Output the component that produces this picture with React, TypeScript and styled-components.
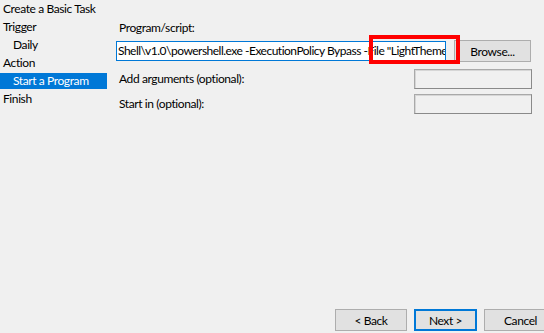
import styled, { createGlobalStyle } from "styled-components";

const GlobalStyle = createGlobalStyle`
    html, body {
        margin: 0;
        padding: 0;
        background: #f0f0f0;
        overflow: hidden;
    }
    body {
        font-family: Lato, "Noto Sans", sans-serif;
        font-size: 12px;
        letter-spacing: -0.4px;
        color: #000;
    }
`;

const Window = styled.div`
    width: 544px;
    height: 333px;
    display: flex;
    flex-direction: column;
    background: #f0f0f0;
`;

const Body = styled.div`
    flex: 1;
    display: flex;
`;

const Steps = styled.ul`
    list-style: none;
    margin: 0;
    padding: 0;
    width: 107px;
    flex-shrink: 0;
`;

const Step = styled.li<{ $sub?: boolean; $active?: boolean }>`
    height: 18px;
    line-height: 18px;
    padding-left: ${props => props.$sub ? "13px" : "3px"};
    white-space: nowrap;
    overflow: hidden;
    background: ${props => props.$active ? "#0078d7" : "transparent"};
    color: ${props => props.$active ? "#fff" : "#000"};
    box-shadow: ${props => props.$active ? "inset 0 1px #f0f0f0, inset 0 -1px #f0f0f0" : "none"};
`;

const Content = styled.div`
    flex: 1;
    min-width: 0;
    padding: 20px 12px 0 9px;
    display: flex;
    flex-direction: column;
`;

const Label = styled.span`
    padding-left: 3px;
    line-height: 16px;
    white-space: nowrap;
`;

const ProgramRow = styled.div`
    position: relative;
    display: flex;
    align-items: center;
    gap: 8px;
    margin-top: 4px;
`;

const PathBox = styled.div`
    flex: 1;
    min-width: 0;
    height: 20px;
    box-sizing: border-box;
    border: 1px solid #0078d7;
    background: #fff;
    overflow: hidden;
    white-space: nowrap;
    line-height: 18px;
    letter-spacing: -0.5px;
    padding-left: 1px;
`;

const Button = styled.button<{ $default?: boolean }>`
    font-family: inherit;
    font-size: 12px;
    letter-spacing: inherit;
    color: #000;
    background: #e1e1e1;
    border: ${props => props.$default ? "2px solid #0078d7" : "1px solid #adadad"};
    box-sizing: border-box;
    height: 22px;
    padding: 0;
    flex-shrink: 0;
`;

const BrowseButton = styled(Button)`
    width: 77px;
    margin-right: 1px;
`;

const Highlight = styled.div`
    position: absolute;
    left: 253px;
    top: -5px;
    width: 91px;
    height: 29px;
    box-sizing: border-box;
    border: 4px solid #ff0000;
    pointer-events: none;
`;

const FieldRow = styled.div<{ $gap: number }>`
    display: flex;
    align-items: center;
    justify-content: space-between;
    margin-top: ${props => props.$gap}px;
`;

const DisabledField = styled.div`
    width: 118px;
    height: 20px;
    box-sizing: border-box;
    border: 1px solid #8a8a8a;
    border-top-color: #a9a9a9;
    border-left-color: #a9a9a9;
    box-shadow: inset 1px 1px #d6d6d6;
    background: #f0f0f0;
`;

const Footer = styled.div`
    display: flex;
    justify-content: flex-end;
    gap: 7px;
    margin-right: -13px;
    padding-bottom: 2px;
`;

const NavButton = styled(Button)<{ $w: number }>`
    width: ${props => props.$w}px;
`;

export default function App() {

    return <Window>
        <GlobalStyle />
        <Body>
            <Steps>
                <Step>Create a Basic Task</Step>
                <Step>Trigger</Step>
                <Step $sub>Daily</Step>
                <Step>Action</Step>
                <Step $sub $active>Start a Program</Step>
                <Step>Finish</Step>
            </Steps>

            <Content>
                <Label>Program/script:</Label>
                <ProgramRow>
                    <PathBox>Shell\v1.0\powershell.exe -ExecutionPolicy Bypass -File "LightThemePa</PathBox>
                    <BrowseButton>Browse...</BrowseButton>
                    <Highlight />
                </ProgramRow>

                <FieldRow $gap={7}>
                    <Label>Add arguments (optional):</Label>
                    <DisabledField />
                </FieldRow>

                <FieldRow $gap={5}>
                    <Label>Start in (optional):</Label>
                    <DisabledField />
                </FieldRow>
            </Content>
        </Body>

        <Footer>
            <NavButton $w={72}>&lt; Back</NavButton>
            <NavButton $w={63} $default>Next &gt;</NavButton>
            <NavButton $w={73}>Cancel</NavButton>
        </Footer>
    </Window>
}
